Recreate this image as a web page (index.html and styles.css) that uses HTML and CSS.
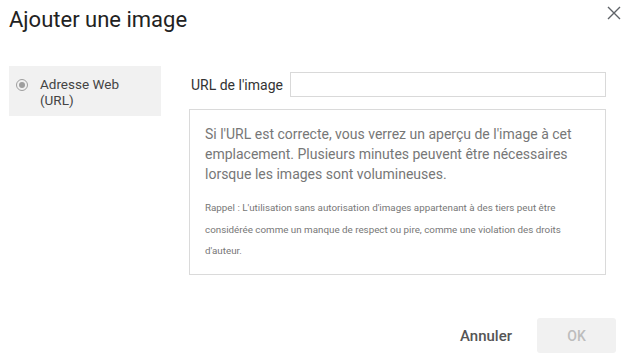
FILE: index.html
```html
<!DOCTYPE html>
<html lang="fr">

<head>
    <meta charset="utf-8">
    <link rel="stylesheet" href="styles.css">
</head>

<body>
    <div class="dialog">
        <div class="dialog-head">
            <h1 class="dialog-title">Ajouter une image</h1>
            <button class="close-btn" aria-label="Fermer">
                <svg width="14" height="14" viewBox="0 0 14 14">
                    <path d="M1 1 L13 13 M13 1 L1 13" stroke="#5f6368" stroke-width="1.4" fill="none" />
                </svg>
            </button>
        </div>

        <div class="dialog-body">
            <div class="side">
                <div class="side-item">
                    <span class="radio"><span class="radio-dot"></span></span>
                    <span class="side-text">Adresse Web<br>(URL)</span>
                </div>
            </div>

            <div class="content">
                <div class="url-row">
                    <label class="url-label" for="imageUrl">URL de l'image</label>
                    <input class="url-input" type="text" id="imageUrl">
                </div>
                <div class="preview">
                    <p class="preview-main">Si l'URL est correcte, vous verrez un aperçu de l'image à cet emplacement. Plusieurs minutes peuvent être nécessaires lorsque les images sont volumineuses.</p>
                    <p class="preview-note">Rappel : L'utilisation sans autorisation d'images appartenant à des tiers peut être considérée comme un manque de respect ou pire, comme une violation des droits d'auteur.</p>
                </div>
            </div>
        </div>

        <div class="dialog-foot">
            <button class="btn btn-cancel">Annuler</button>
            <button class="btn btn-ok" disabled>OK</button>
        </div>
    </div>
</body>

</html>
```

FILE: styles.css
```css
html,
body {
    margin: 0;
    background: #ffffff;
}

.dialog {
    font-family: Roboto, "Liberation Sans", sans-serif;
    width: 628px;
    height: 363px;
    position: relative;
    color: #202124;
}

.dialog-head {
    display: flex;
    justify-content: space-between;
    align-items: flex-start;
    padding: 6px 7px 0 9px;
}

.dialog-title {
    margin: 0;
    font-size: 22px;
    font-weight: 400;
    line-height: 28px;
    color: #222222;
}

.close-btn {
    border: none;
    background: none;
    padding: 0;
    cursor: pointer;
}

.dialog-body {
    display: flex;
    margin-top: 32px;
    padding-left: 9px;
}

.side {
    width: 152px;
}

.side-item {
    display: flex;
    align-items: flex-start;
    gap: 12px;
    height: 50px;
    box-sizing: border-box;
    padding: 10px 7px;
    background: #f1f1f1;
}

.radio {
    flex: none;
    width: 10px;
    height: 10px;
    margin-top: 3px;
    border: 1px solid #9e9e9e;
    border-radius: 50%;
    display: flex;
    align-items: center;
    justify-content: center;
}

.radio-dot {
    width: 6px;
    height: 6px;
    border-radius: 50%;
    background: #9e9e9e;
}

.side-text {
    font-size: 13.5px;
    line-height: 16px;
    color: #444444;
}

.content {
    margin-left: 28px;
    width: 417px;
}

.url-row {
    display: flex;
    align-items: center;
    margin-top: 6px;
}

.url-label {
    font-size: 14px;
    color: #333333;
    width: 99px;
    padding-left: 2px;
}

.url-input {
    width: 316px;
    height: 25px;
    box-sizing: border-box;
    border: 1px solid #d9d9d9;
    outline: none;
    padding: 0 6px;
}

.preview {
    margin-top: 12px;
    height: 166px;
    box-sizing: border-box;
    border: 1px solid #dadada;
    padding: 14px 15px 0 15px;
    color: #777777;
}

.preview-main {
    margin: 0;
    font-size: 14px;
    line-height: 20px;
}

.preview-note {
    margin: 13px 0 0 0;
    font-size: 9.8px;
    line-height: 21.5px;
}

.dialog-foot {
    position: absolute;
    right: 12px;
    bottom: 10px;
    display: flex;
    gap: 12px;
}

.btn {
    font-family: Roboto, "Liberation Sans", sans-serif;
    font-size: 14px;
    font-weight: 500;
    height: 35px;
    border: none;
    border-radius: 3px;
    background: none;
    cursor: pointer;
}

.btn-cancel {
    font-size: 15px;
    color: #555555;
    padding: 0 13px;
}

.btn-ok {
    width: 79px;
    background: #f1f1f1;
    color: #bdbdbd;
}
```
